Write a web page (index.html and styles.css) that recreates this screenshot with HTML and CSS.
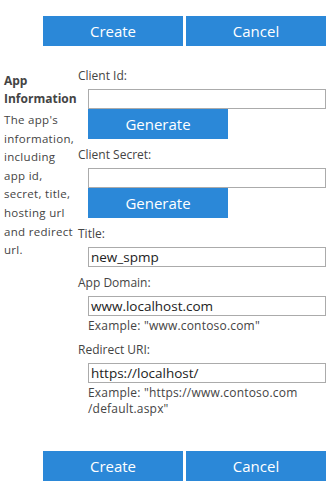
FILE: index.html
```html
<!DOCTYPE html>
<html>
<head>
<meta charset="utf-8">
<link rel="stylesheet" href="styles.css">
</head>
<body>
<div class="actions top">
  <button class="btn">Create</button>
  <button class="btn">Cancel</button>
</div>
<div class="section">
  <div class="side">
    <div class="side-title">App Information</div>
    <div class="side-desc">The app's information, including app id, secret, title, hosting url and redirect url.</div>
  </div>
  <div class="fields">
    <div class="field">
      <div class="label">Client Id:</div>
      <div class="ctl">
        <div class="input"></div>
        <button class="btn gen">Generate</button>
      </div>
    </div>
    <div class="field">
      <div class="label">Client Secret:</div>
      <div class="ctl">
        <div class="input"></div>
        <button class="btn gen">Generate</button>
      </div>
    </div>
    <div class="field">
      <div class="label">Title:</div>
      <div class="ctl">
        <div class="input">new_spmp</div>
      </div>
    </div>
    <div class="field">
      <div class="label">App Domain:</div>
      <div class="ctl">
        <div class="input">www.localhost.com</div>
        <div class="hint">Example: "www.contoso.com"</div>
      </div>
    </div>
    <div class="field last">
      <div class="label">Redirect URI:</div>
      <div class="ctl">
        <div class="input">https://localhost/</div>
        <div class="hint">Example: "https://www.contoso.com<wbr>/default.aspx"</div>
      </div>
    </div>
  </div>
</div>
<div class="actions bottom">
  <button class="btn">Create</button>
  <button class="btn">Cancel</button>
</div>
</body>
</html>
```
FILE: styles.css
```css
html, body {
  margin: 0;
  padding: 0;
  background: #ffffff;
}
body {
  font-family: "Open Sans", "Noto Sans", sans-serif;
  color: #333333;
  width: 332px;
}
.actions {
  display: flex;
  gap: 3px;
  padding-left: 43px;
}
.actions.top {
  padding-top: 16px;
}
.actions.bottom {
  padding-top: 34px;
}
.btn {
  width: 140px;
  height: 30px;
  border: none;
  margin: 0;
  padding: 0;
  background: #2b88d8;
  color: #ffffff;
  font-family: "Open Sans", "Noto Sans", sans-serif;
  font-size: 15px;
  line-height: 30px;
}
.section {
  display: flex;
  padding-top: 21px;
}
.side {
  width: 74px;
  padding-left: 4px;
  flex: none;
}
.side-title {
  font-weight: bold;
  font-size: 12px;
  line-height: 18px;
  color: #444444;
  margin-top: 5px;
}
.side-desc {
  font-size: 11.5px;
  line-height: 18.6px;
  color: #444444;
  letter-spacing: 0.3px;
  margin-top: 3px;
}
.fields {
  display: flex;
  flex-direction: column;
  width: 248px;
}
.field {
  display: flex;
  flex-direction: column;
  padding-bottom: 7px;
}
.field.last {
  padding-bottom: 0;
}
.label {
  font-size: 12px;
  line-height: 18px;
  color: #444444;
  margin-bottom: 4px;
}
.ctl {
  display: flex;
  flex-direction: column;
  padding-left: 10px;
}
.input {
  height: 18px;
  border: 1px solid #ababab;
  font-size: 13.5px;
  line-height: 18px;
  color: #222222;
  padding-left: 2px;
  box-sizing: content-box;
}
.gen {
  display: block;
}
.hint {
  font-size: 12px;
  line-height: 16px;
  color: #444444;
  letter-spacing: 0.2px;
  margin-top: 2px;
  width: 237px;
}
```
